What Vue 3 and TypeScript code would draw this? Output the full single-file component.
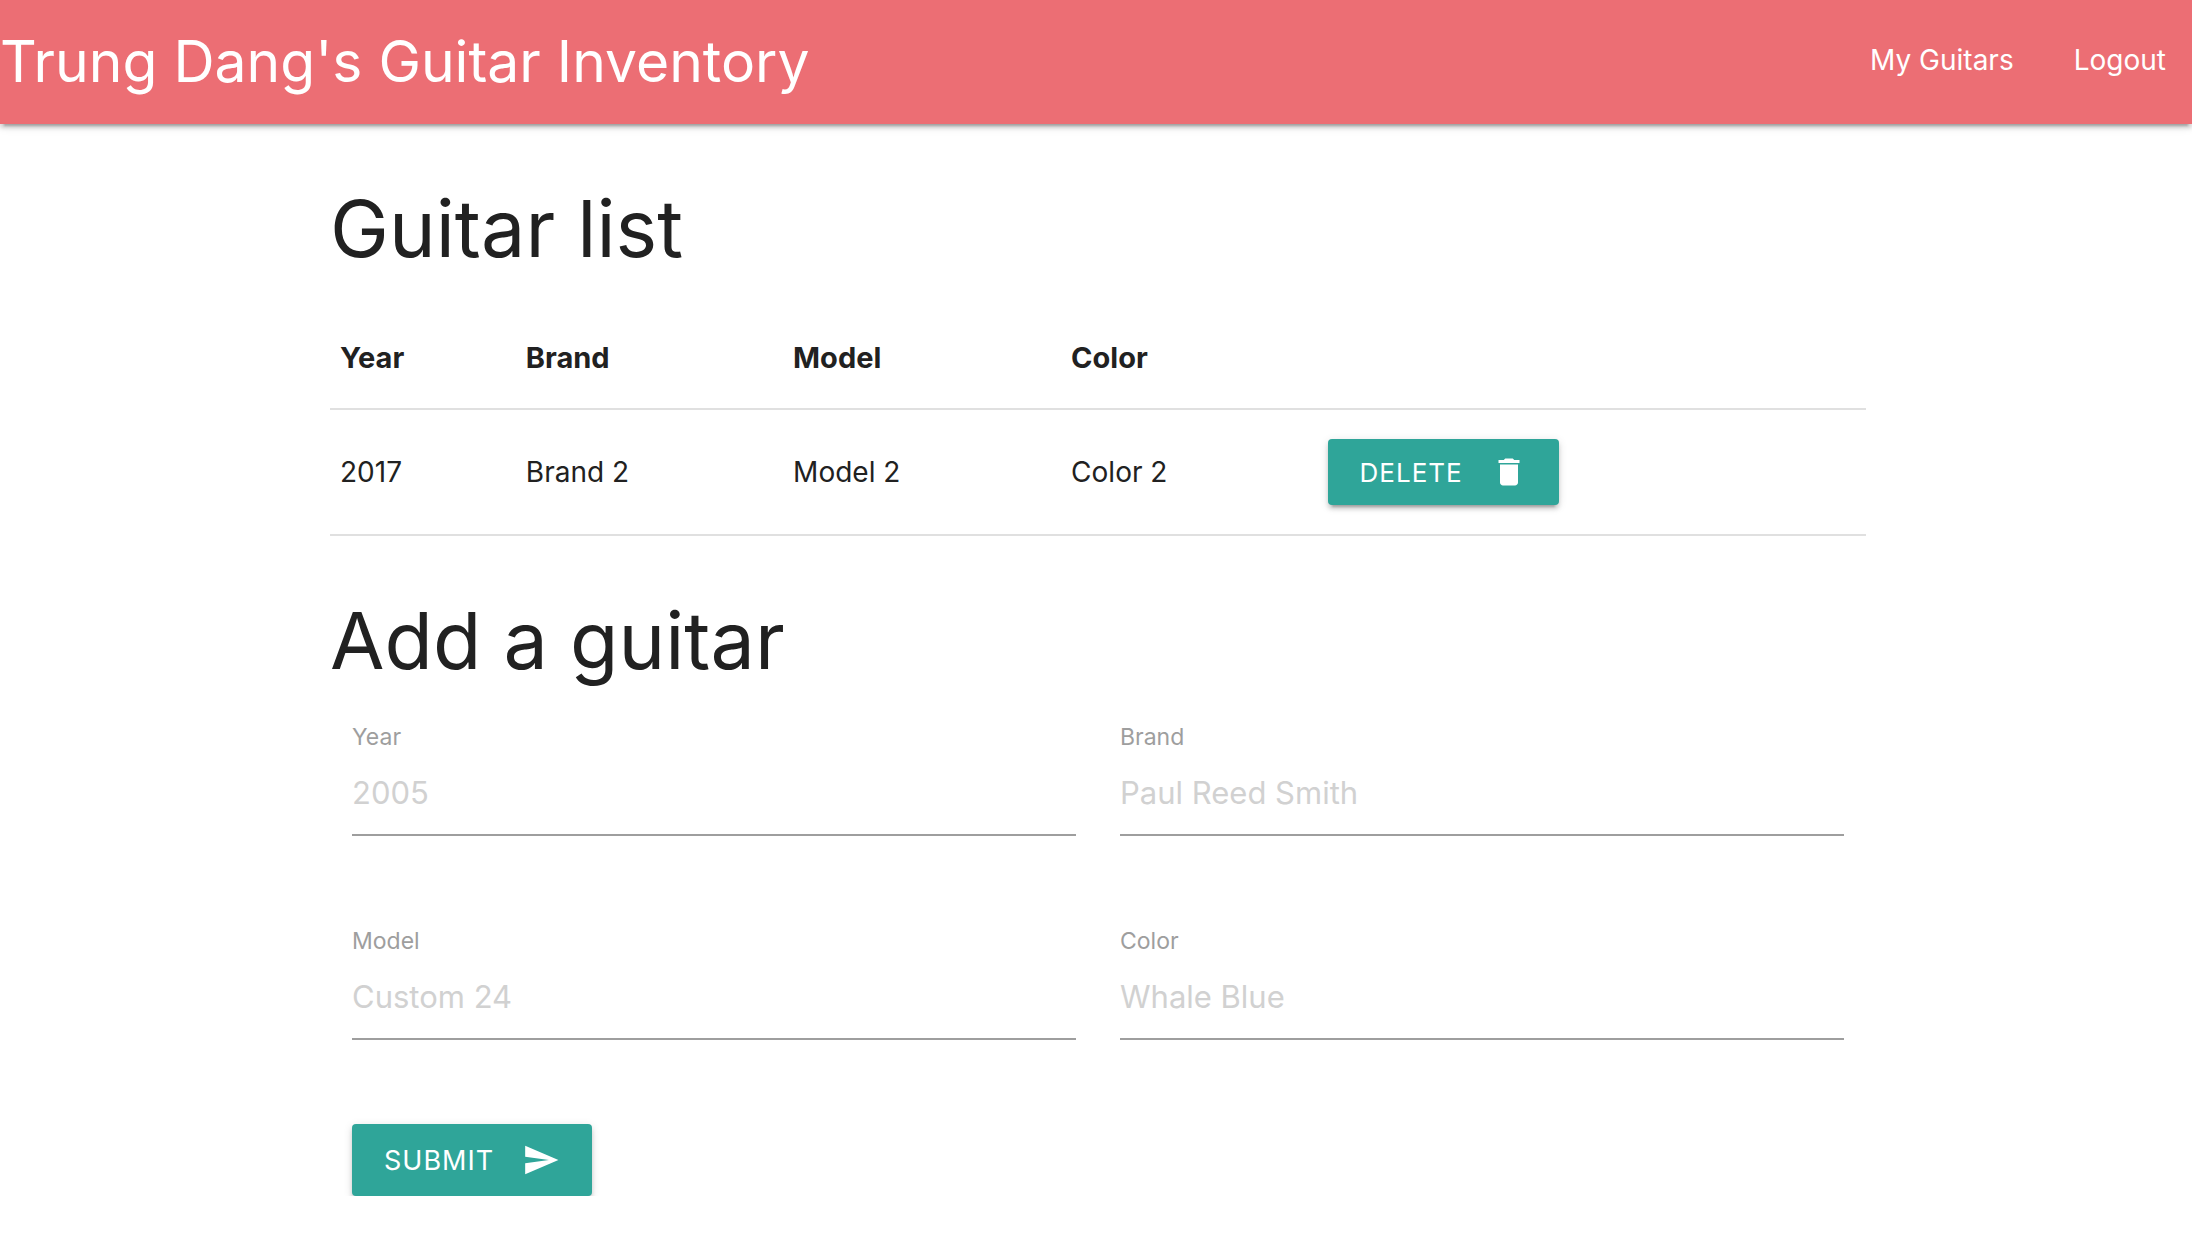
<script setup lang="ts">
import { ref } from 'vue'

interface Guitar {
  id: number
  year: string
  brand: string
  model: string
  color: string
}

const guitars = ref<Guitar[]>([
  { id: 2, year: '2017', brand: 'Brand 2', model: 'Model 2', color: 'Color 2' },
])

const fields = [
  { name: 'year', label: 'Year', placeholder: '2005' },
  { name: 'brand', label: 'Brand', placeholder: 'Paul Reed Smith' },
  { name: 'model', label: 'Model', placeholder: 'Custom 24' },
  { name: 'color', label: 'Color', placeholder: 'Whale Blue' },
] as const

const draft = ref({ year: '', brand: '', model: '', color: '' })

function remove(id: number) {
  guitars.value = guitars.value.filter((guitar) => guitar.id !== id)
}

function submit() {
  guitars.value.push({ id: Date.now(), ...draft.value })
  draft.value = { year: '', brand: '', model: '', color: '' }
}
</script>

<template>
  <div class="page">
    <nav class="navbar">
      <a href="#" class="brand">Trung Dang's Guitar Inventory</a>
      <ul class="links">
        <li><a href="#guitars">My Guitars</a></li>
        <li><a href="#logout">Logout</a></li>
      </ul>
    </nav>

    <main class="container">
      <h3>Guitar list</h3>
      <table>
        <colgroup>
          <col class="col-year" />
          <col class="col-brand" />
          <col class="col-model" />
          <col class="col-color" />
          <col />
        </colgroup>
        <thead>
          <tr>
            <th>Year</th>
            <th>Brand</th>
            <th>Model</th>
            <th>Color</th>
            <th></th>
          </tr>
        </thead>
        <tbody>
          <tr v-for="guitar in guitars" :key="guitar.id">
            <td>{{ guitar.year }}</td>
            <td>{{ guitar.brand }}</td>
            <td>{{ guitar.model }}</td>
            <td>{{ guitar.color }}</td>
            <td>
              <button type="button" class="btn btn-delete" @click="remove(guitar.id)">
                DELETE
                <svg viewBox="0 0 24 24" aria-hidden="true">
                  <path d="M6 19c0 1.1.9 2 2 2h8c1.100 0 2-.9 2-2V7H6v12zM19 4h-3.500l-1-1h-5l-1 1H5v2h14V4z" />
                </svg>
              </button>
            </td>
          </tr>
        </tbody>
      </table>

      <h3>Add a guitar</h3>
      <form @submit.prevent="submit">
        <div class="fields">
          <div v-for="field in fields" :key="field.name" class="field">
            <label :for="field.name">{{ field.label }}</label>
            <input
              :id="field.name"
              v-model="draft[field.name]"
              type="text"
              :placeholder="field.placeholder"
            />
          </div>
        </div>
        <button type="submit" class="btn btn-submit">
          SUBMIT
          <svg viewBox="0 0 24 24" aria-hidden="true">
            <path d="M2.010 21L23 12 2.010 3 2 10l15 2-15 2z" />
          </svg>
        </button>
      </form>
    </main>
  </div>
</template>

<style>
body {
  background: #fff;
}
</style>

<style scoped>
.page {
  font-family: Inter, 'Liberation Sans', sans-serif;
  font-size: 28px;
  line-height: 44px;
  color: #212121;
}

.navbar {
  display: flex;
  align-items: flex-start;
  justify-content: space-between;
  height: 124px;
  padding-right: 26px;
  background: #ec6e74;
  box-shadow:
    0 4px 4px 0 rgba(0, 0, 0, 0.14),
    0 2px 10px 0 rgba(0, 0, 0, 0.12),
    0 6px 2px -4px rgba(0, 0, 0, 0.2);
}

.navbar a {
  color: #fff;
  text-decoration: none;
}

.brand {
  font-size: 57px;
  line-height: 124px;
}

.links {
  display: flex;
  gap: 60px;
  margin: 0;
  padding: 0;
  line-height: 120px;
  list-style: none;
}

.container {
  margin: 0 326px 0 330px;
}

h3 {
  margin: 58px 0 33px;
  font-size: 79px;
  font-weight: 400;
  line-height: 93px;
}

table {
  width: 100%;
  border-collapse: collapse;
  table-layout: fixed;
}

.col-year {
  width: 12.1%;
}

.col-brand {
  width: 17.4%;
}

.col-model {
  width: 18.1%;
}

.col-color {
  width: 16.7%;
}

tr {
  border-bottom: 2px solid #e0e0e0;
}

th,
td {
  padding: 0 10px;
  text-align: left;
}

th {
  height: 100px;
  font-size: 29px;
  font-weight: 700;
}

td {
  height: 124px;
}

.btn {
  display: flex;
  align-items: center;
  gap: 28px;
  padding: 0 32px;
  border: 0;
  border-radius: 4px;
  background: #2fa599;
  color: #fff;
  font-family: inherit;
  letter-spacing: 1px;
  cursor: pointer;
  box-shadow:
    0 4px 4px 0 rgba(0, 0, 0, 0.14),
    0 2px 10px 0 rgba(0, 0, 0, 0.12),
    0 6px 2px -4px rgba(0, 0, 0, 0.2);
}

.btn svg {
  fill: currentColor;
}

.btn-delete {
  height: 66px;
  font-size: 26px;
}

.btn-delete svg {
  width: 36px;
  height: 36px;
}

.btn-submit {
  height: 72px;
  margin-top: 84px;
  font-size: 27px;
}

.btn-submit svg {
  width: 38px;
  height: 38px;
}

form {
  padding: 0 22px;
}

.fields {
  display: grid;
  grid-template-columns: 1fr 1fr;
  gap: 88px 44px;
}

.field {
  display: flex;
  flex-direction: column;
}

label {
  color: #9e9e9e;
  font-size: 23px;
  line-height: 34px;
}

input {
  height: 82px;
  box-sizing: border-box;
  padding: 0 0 4px;
  border: 0;
  border-bottom: 2px solid #9e9e9e;
  outline: 0;
  background: transparent;
  color: #212121;
  font-family: inherit;
  font-size: 31px;
}

input::placeholder {
  color: #d1d1d1;
  opacity: 1;
}
</style>
